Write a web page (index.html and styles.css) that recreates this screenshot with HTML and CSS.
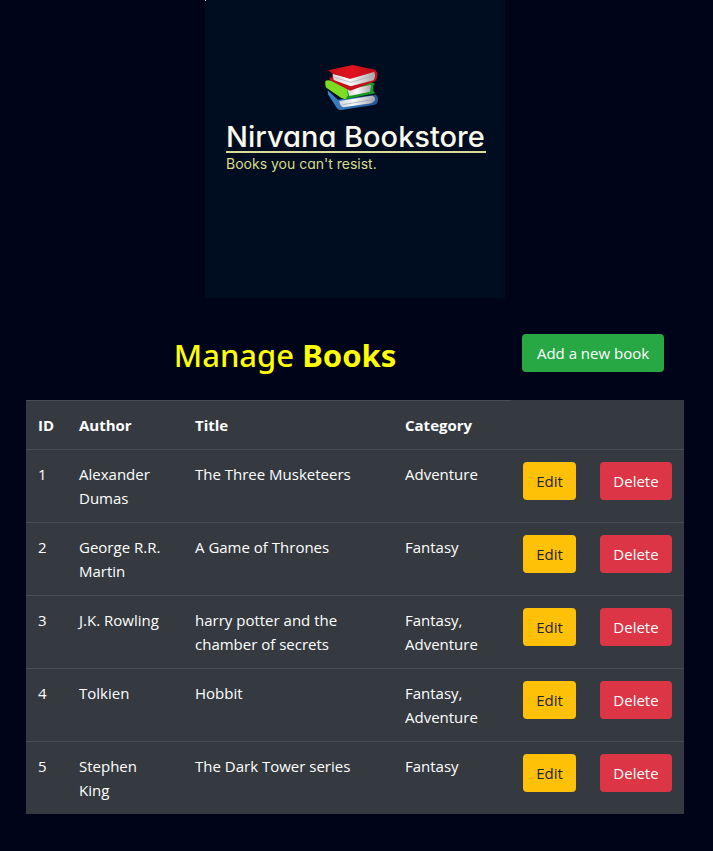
FILE: index.html
```html
<!DOCTYPE html>
<html lang="en">
<head>
<meta charset="utf-8">
<meta name="viewport" content="width=device-width, initial-scale=1">
<title>Nirvana Bookstore</title>
<link rel="stylesheet" href="styles.css">
</head>
<body>
<main class="page">
  <header class="logo">
    <svg class="logo-books" viewBox="0 0 270 195" aria-hidden="true">
      <defs>
        <linearGradient id="red" x1="0" y1="0" x2="1" y2="0"><stop offset="0" stop-color="#c90f1c"/><stop offset=".5" stop-color="#e0141f"/><stop offset="1" stop-color="#b80d1a"/></linearGradient>
        <linearGradient id="paper" x1="0" y1="0" x2="1" y2="0"><stop offset="0" stop-color="#d3d2d8"/><stop offset=".4" stop-color="#fafafa"/><stop offset="1" stop-color="#a9a7ad"/></linearGradient>
        <linearGradient id="blue" x1="0" y1="0" x2="1" y2="0"><stop offset="0" stop-color="#3f82c6"/><stop offset="1" stop-color="#245799"/></linearGradient>
      </defs>
      <path fill="url(#blue)" d="M53 106 L84 134 L196 119 Q207 124 203 140 Q202 146 194 149 L94 165 Q84 166 80 158 L54 118Z"/>
      <path fill="url(#paper)" d="M88 138 L185 122 Q198 123 194 137 L184 145 L100 157 Q88 151 88 138Z"/>
      <path fill="none" stroke="#8f9db5" stroke-width="2" d="M98 149 L188 134"/>
      <path fill="#159a22" d="M65 76 L184 82 L196 87 L190 91 L190 108 L196 115 L107 133 L94 128Z"/>
      <path fill="url(#paper)" d="M112 104 L184 89 L180 110 L118 123Z"/>
      <path fill="#7bdc22" d="M46 79 Q49 74 64 77 L112 102 Q110 110 114 121 L107 133 L94 129 L49 98 Q44 90 46 79Z"/>
      <path fill="#c7101c" d="M55 46 L68 57 L65 69 L58 67 L60 76 L121 107 L195 79 Q204 69 202 53 L195 44Z"/>
      <path fill="url(#paper)" d="M68 57 L122 71 L192 51 Q199 60 191 76 L122 94 L71 75Z"/>
      <path fill="none" stroke="#aaa7ad" stroke-width="2" d="M74 67 L122 82 L190 62"/>
      <path fill="url(#red)" d="M54 46 L128 30 L199 45 L123 70 Q118 72 112 69Z"/>
    </svg>
    <h1 class="logo-name">Nirvana Bookstore</h1>
    <p class="logo-tagline">Books you can't resist.</p>
  </header>

  <section class="toolbar">
    <h2 class="heading">Manage <b>Books</b></h2>
    <button class="btn btn-add" type="button">Add a new book</button>
  </section>

  <table class="books">
    <colgroup>
      <col class="col-id"><col class="col-author"><col class="col-title"><col class="col-category"><col class="col-edit"><col class="col-delete">
    </colgroup>
    <thead>
      <tr><th scope="col">ID</th><th scope="col">Author</th><th scope="col">Title</th><th scope="col">Category</th><td></td><td></td></tr>
    </thead>
    <tbody>
      <tr><td>1</td><td>Alexander Dumas</td><td>The Three Musketeers</td><td>Adventure</td><td><button class="btn btn-edit" type="button">Edit</button></td><td><button class="btn btn-delete" type="button">Delete</button></td></tr>
      <tr><td>2</td><td>George R.R. Martin</td><td>A Game of Thrones</td><td>Fantasy</td><td><button class="btn btn-edit" type="button">Edit</button></td><td><button class="btn btn-delete" type="button">Delete</button></td></tr>
      <tr><td>3</td><td>J.K. Rowling</td><td>harry potter and the chamber of secrets</td><td>Fantasy, Adventure</td><td><button class="btn btn-edit" type="button">Edit</button></td><td><button class="btn btn-delete" type="button">Delete</button></td></tr>
      <tr><td>4</td><td>Tolkien</td><td>Hobbit</td><td>Fantasy, Adventure</td><td><button class="btn btn-edit" type="button">Edit</button></td><td><button class="btn btn-delete" type="button">Delete</button></td></tr>
      <tr><td>5</td><td>Stephen King</td><td>The Dark Tower series</td><td>Fantasy</td><td><button class="btn btn-edit" type="button">Edit</button></td><td><button class="btn btn-delete" type="button">Delete</button></td></tr>
    </tbody>
  </table>
</main>
</body>
</html>
```
FILE: styles.css
```css
* {
  box-sizing: border-box;
}

body {
  margin: 0;
  background: #000418;
  color: #fff;
  font-family: "Open Sans", "Noto Sans", sans-serif;
  font-size: 15px;
  line-height: 24px;
}

.page {
  padding: 0 29px 36px 26px;
}

.logo {
  position: relative;
  width: 300px;
  margin: 0 auto;
  padding: 55px 19px 123px 21px;
  background: #000c20;
  font-family: Inter, sans-serif;
  font-feature-settings: "cv11";
}

.logo::before {
  content: "";
  position: absolute;
  top: 0;
  left: 0;
  width: 1px;
  height: 1px;
  background: #dfe8ec;
}

.logo-books {
  display: block;
  width: 90px;
  height: 65px;
  margin: 0 84px;
}

.logo-name {
  margin: 0;
  padding-top: 3px;
  border-bottom: 2px solid #d9dc94;
  color: #fbf9ea;
  font-size: 29px;
  font-weight: 500;
  line-height: 28px;
  white-space: nowrap;
}

.logo-tagline {
  margin: 0;
  color: #d9dc8a;
  font-size: 14px;
  line-height: 22px;
}

.toolbar {
  display: grid;
  grid-template-columns: 1fr auto;
  align-items: start;
  gap: 26px;
  padding: 36px 20px 24px 48px;
}

.heading {
  margin: 0;
  color: #ff0;
  font-family: "Noto Sans", "Open Sans", sans-serif;
  font-size: 31px;
  font-weight: 500;
  line-height: 42px;
  text-align: center;
}

.heading b {
  font-weight: 700;
}

.btn {
  display: block;
  width: 100%;
  height: 38px;
  padding: 0 12px;
  border: 0;
  border-radius: 4px;
  color: #fff;
  font: inherit;
  white-space: nowrap;
  cursor: pointer;
}

.btn-add {
  width: 142px;
  background: #28a745;
}

.btn-edit {
  background: #ffc107;
  color: #212529;
}

.btn-delete {
  background: #dc3545;
}

.books {
  width: 100%;
  table-layout: fixed;
  border-spacing: 0;
  background: #343a40;
}

.books th,
.books td {
  padding: 12px;
  border-top: 1px solid #454d55;
  text-align: left;
  vertical-align: top;
}

.books thead td {
  border-top-color: transparent;
}

.books th {
  font-weight: 700;
}

.col-id {
  width: 41px;
}

.col-author {
  width: 116px;
}

.col-category {
  width: 118px;
}

.col-edit {
  width: 77px;
}

.col-delete {
  width: 96px;
}
```
